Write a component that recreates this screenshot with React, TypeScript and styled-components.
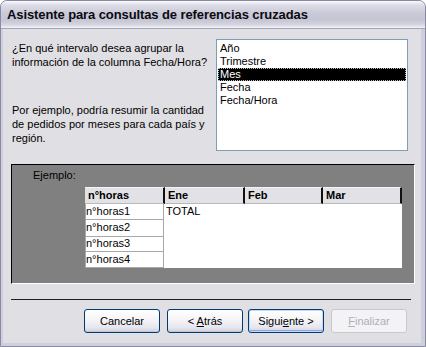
import React from 'react';
import styled, { createGlobalStyle } from 'styled-components';

const GlobalStyle = createGlobalStyle`
  html, body { margin: 0; padding: 0; background: #ffffff; }
  body { font-family: "Liberation Sans", Arial, sans-serif; font-size: 11px; color: #000; }
  #root { width: 426px; height: 347px; }
`;

const Window = styled.div`
  width: 426px;
  height: 347px;
  box-sizing: border-box;
  display: flex;
  flex-direction: column;
  border: 1px solid #8a8aa6;
  border-radius: 7px 7px 0 0;
  background: #cfcfdb;
  overflow: hidden;
`;

const TitleBar = styled.div`
  height: 28px;
  flex: none;
  box-sizing: border-box;
  display: flex;
  align-items: center;
  padding: 0 6px 1px;
  background: linear-gradient(to bottom, #fbfbfd 0%, #dedee8 14%, #cacad8 45%, #c4c4d3 70%, #d6d6e1 88%, #f2f2f6 100%);
  border-bottom: 1px solid #a4a4b8;
`;

const Title = styled.span`
  font-family: "Liberation Sans", Arial, sans-serif;
  font-weight: bold;
  font-size: 13px;
  letter-spacing: -0.1px;
  color: #0a0a10;
`;

const Body = styled.div`
  flex: 1;
  margin: 0 4px 3px 2px;
  background: #e0dfe3;
  display: flex;
  flex-direction: column;
  padding: 10px 6px 0 8px;
`;

const TopSection = styled.div`
  display: flex;
  justify-content: space-between;
  padding: 0 7px 0 1px;
  margin-bottom: 13px;
`;

const Intro = styled.div`
  width: 200px;
  padding-top: 2px;
`;

const Para = styled.p<{ $gap?: number }>`
  margin: 0 0 ${(p) => p.$gap ?? 0}px;
  line-height: 14px;
`;

const ListBox = styled.div`
  width: 192px;
  height: 112px;
  box-sizing: border-box;
  border: 1px solid #7f9db9;
  background: #ffffff;
  padding: 2px 1px;
`;

const Item = styled.div<{ $selected?: boolean }>`
  height: 13px;
  line-height: 13px;
  padding-left: 2px;
  box-sizing: border-box;
  background: ${(p) => (p.$selected ? '#000000' : 'transparent')};
  color: ${(p) => (p.$selected ? '#ffffff' : '#000000')};
  outline: ${(p) => (p.$selected ? '1px dotted #bdbdbd' : 'none')};
  outline-offset: -1px;
`;

const ExamplePanel = styled.div`
  height: 120px;
  box-sizing: border-box;
  background: #808080;
  border-top: 1px solid #000000;
  border-left: 1px solid #000000;
  border-right: 1px solid #ffffff;
  border-bottom: 1px solid #ffffff;
  padding: 3px 0 0 21px;
`;

const Label = styled.div`
  line-height: 14px;
  color: #000;
  margin-bottom: 5px;
`;

const Grid = styled.div`
  margin-left: 52px;
  width: 317px;
`;

const HeaderRow = styled.div`
  display: flex;
  height: 17px;
`;

const HeaderCell = styled.div<{ $w: number }>`
  width: ${(p) => p.$w}px;
  box-sizing: border-box;
  background: #e2e2e6;
  border-top: 1px solid #f4f4f6;
  border-right: 2px solid #101010;
  border-bottom: 1px solid #b8b8c0;
  padding-left: 3px;
  font-weight: bold;
  line-height: 15px;
`;

const GridBody = styled.div`
  display: flex;
  height: 64px;
`;

const RowHeaders = styled.div`
  width: 79px;
  display: flex;
  flex-direction: column;
`;

const RowCell = styled.div<{ $h: number }>`
  height: ${(p) => p.$h}px;
  box-sizing: border-box;
  background: #ffffff;
  border: 1px solid #a8a8a8;
  border-top: none;
  padding-left: 0;
  line-height: ${(p) => p.$h - 2}px;
`;

const ValueArea = styled.div`
  flex: 1;
  background: #ffffff;
  padding-left: 2px;
  line-height: 15px;
`;

const Separator = styled.div`
  height: 0;
  border-top: 1px solid #1e1e1e;
  margin: 15px 4px 0 0;
`;

const ButtonRow = styled.div`
  display: flex;
  justify-content: flex-end;
  padding-right: 8px;
  margin-top: 9px;
`;

const Button = styled.button<{ $gap?: number; $default?: boolean }>`
  width: 76px;
  height: 24px;
  margin-left: ${(p) => p.$gap ?? 0}px;
  box-sizing: border-box;
  border-radius: 3px;
  border: 1px solid #003c74;
  font-family: "Liberation Sans", Arial, sans-serif;
  font-size: 11px;
  color: #000;
  padding: 0;
  background: linear-gradient(to bottom, #ffffff 0%, #f6f6f9 40%, #e6e6ee 80%, #cfd0dc 100%);
  box-shadow: ${(p) =>
    p.$default
      ? 'inset 0 0 0 1px #c7d6f2, inset 0 -1px 0 1px #8fa9dc'
      : 'inset 0 -1px 0 0 #c4c6d4'};

  &:disabled {
    border-color: #c9c8d0;
    background: #f3f3f5;
    color: #b0afb8;
    box-shadow: none;
  }

  u { text-decoration: underline; }
`;

export default function App() {
  return (
    <>
      <GlobalStyle />
      <Window>
        <TitleBar>
          <Title>Asistente para consultas de referencias cruzadas</Title>
        </TitleBar>
        <Body>
          <TopSection>
            <Intro>
              <Para $gap={34}>
                ¿En qué intervalo desea agrupar la información de la columna Fecha/Hora?
              </Para>
              <Para>
                Por ejemplo, podría resumir la cantidad de pedidos por meses para cada país y región.
              </Para>
            </Intro>
            <ListBox>
              <Item>Año</Item>
              <Item>Trimestre</Item>
              <Item $selected>Mes</Item>
              <Item>Fecha</Item>
              <Item>Fecha/Hora</Item>
            </ListBox>
          </TopSection>
          <ExamplePanel>
            <Label>Ejemplo:</Label>
            <Grid>
              <HeaderRow>
                <HeaderCell $w={80}>n°horas</HeaderCell>
                <HeaderCell $w={80}>Ene</HeaderCell>
                <HeaderCell $w={78}>Feb</HeaderCell>
                <HeaderCell $w={79}>Mar</HeaderCell>
              </HeaderRow>
              <GridBody>
                <RowHeaders>
                  <RowCell $h={16}>n°horas1</RowCell>
                  <RowCell $h={17}>n°horas2</RowCell>
                  <RowCell $h={15}>n°horas3</RowCell>
                  <RowCell $h={16}>n°horas4</RowCell>
                </RowHeaders>
                <ValueArea>TOTAL</ValueArea>
              </GridBody>
            </Grid>
          </ExamplePanel>
          <Separator />
          <ButtonRow>
            <Button>Cancelar</Button>
            <Button $gap={7}>&lt; <u>A</u>trás</Button>
            <Button $gap={5} $default>Sigui<u>e</u>nte &gt;</Button>
            <Button $gap={7} disabled><u>F</u>inalizar</Button>
          </ButtonRow>
        </Body>
      </Window>
    </>
  );
}
